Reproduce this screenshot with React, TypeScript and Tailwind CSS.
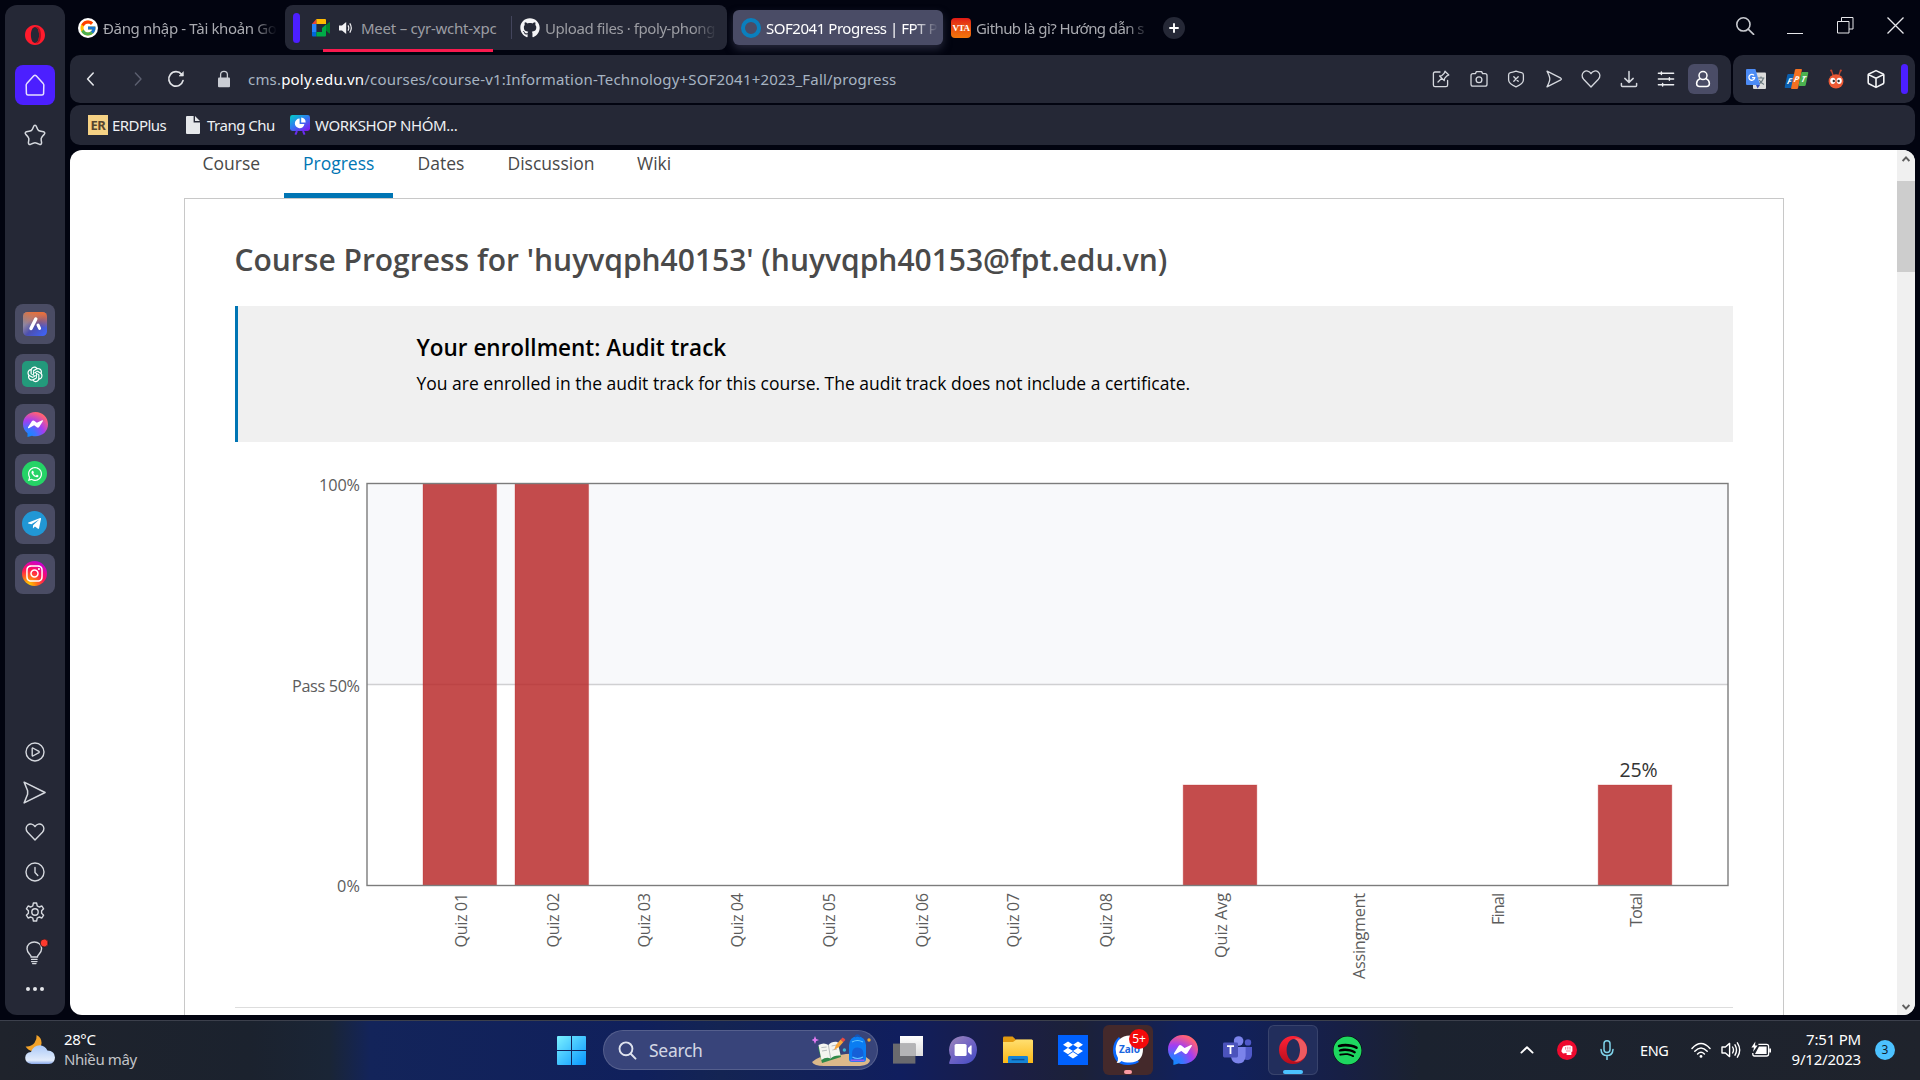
import React from "react";
import { FcGoogle } from "react-icons/fc";
import {
  FaGithub,
  FaWhatsapp,
  FaTelegramPlane,
  FaInstagram,
  FaDropbox,
  FaSpotify,
} from "react-icons/fa";
import { AiOutlineOpenAI } from "react-icons/ai";

type Kids = { children: React.ReactNode };

function Line({
  size = 20,
  width = 1.3,
  color = "#d5d8de",
  box = 20,
  children,
}: { size?: number; width?: number; color?: string; box?: number } & Kids) {
  return (
    <svg
      width={size}
      height={size}
      viewBox={`0 0 ${box} ${box}`}
      fill="none"
      stroke={color}
      strokeWidth={width}
      strokeLinecap="round"
      strokeLinejoin="round"
      className="shrink-0"
    >
      {children}
    </svg>
  );
}

const HEART = "M10 18 L2.6 10.2 C0.4 7.6 0.8 4.6 2.8 3 C5 1.2 8.4 1.8 10 4.6 C11.6 1.8 15 1.2 17.2 3 C19.2 4.6 19.6 7.6 17.4 10.2 Z";
const SEND = "M3 2.2 C5 6 5.8 7.8 5.8 10 C5.8 12.2 5 14 3 17.8 L16.8 10.8 Q18 10 16.8 9.2 Z";

function MessengerLogo({ size, id }: { size: number; id: string }) {
  return (
    <svg width={size} height={size} viewBox="0 0 30 30" className="shrink-0">
      <defs>
        <radialGradient id={id} cx="0.2" cy="1" r="1.1">
          <stop offset="0" stopColor="#0a8cff" />
          <stop offset="0.3" stopColor="#3f73ff" />
          <stop offset="0.6" stopColor="#a33df2" />
          <stop offset="0.93" stopColor="#ff5f7a" />
          <stop offset="1" stopColor="#ff6c66" />
        </radialGradient>
      </defs>
      <path d="M15 0 C23.5 0 30 6.2 30 14.6 C30 23 23.5 29 15 29 C13.4 29 12 28.8 10.8 28.4 L5.4 30 V25.4 C2 22.8 0 19 0 14.6 C0 6.2 6.5 0 15 0Z" fill={`url(#${id})`} />
      <path d="M6 18.2 L10.6 11 Q11.8 9.4 13.4 10.6 L16.6 13 L23 10 Q24.4 9.6 23.8 11 L19.4 18 Q18.2 19.6 16.6 18.4 L13.4 16 L7 19.4 Q5.6 19.6 6 18.2Z" fill="#fff" />
    </svg>
  );
}

function Sidebar() {
  const tile =
    "flex h-10 w-10 shrink-0 items-center justify-center rounded-lg bg-[#4a4c64]";
  const row = "flex h-10 w-10 items-center justify-center";
  return (
    <aside className="ml-[5px] mt-[5px] flex h-[1010px] w-[60px] shrink-0 flex-col items-center rounded-xl bg-[#252836]">
      <div className="flex h-[60px] items-center">
        <svg width="22" height="22" viewBox="0 0 22 22">
          <path fillRule="evenodd" d="M11 1 C16.6 1 21 5.4 21 11 C21 16.6 16.6 21 11 21 C5.4 21 1 16.6 1 11 C1 5.4 5.4 1 11 1Z M11 3 C8.6 3 6.9 6.6 6.9 11 C6.9 15.4 8.6 19 11 19 C13.4 19 15.1 15.4 15.1 11 C15.1 6.6 13.4 3 11 3Z" fill="#ff1b2d" />
          <path d="M11 3 C14 1.6 17 4.6 17 11 C17 17.4 14 20.4 11 19 C13.4 19 15.1 15.4 15.1 11 C15.1 6.6 13.4 3 11 3Z" fill="#b0101f" />
        </svg>
      </div>
      <div className="flex h-10 w-10 items-center justify-center rounded-lg bg-[#4c1fff]">
        <Line size={22} box={22} width={1.5} color="#e6e0ff">
          <path d="M2.2 11.6 Q2 10.6 2.8 9.6 L9.8 1.8 Q11 0.8 12.2 1.8 L19.2 9.6 Q20 10.6 19.8 11.6 L19.6 19.6 Q19.4 21 18 21 H4 Q2.6 21 2.4 19.6 Z" />
        </Line>
      </div>
      <div className="-ml-px mt-[10px] flex h-10 items-center">
        <Line size={22} box={22} width={1.5}>
          <path d="M11 1.2 Q12 1.2 12.6 3 Q13.6 6 15 6.8 Q16.6 7.2 19.6 7.8 Q21.6 8.6 20.2 10.4 Q17.4 13.2 17.2 14.4 Q17 16 17.6 18.6 Q17.6 20.8 15.6 20.4 Q12.4 18.8 11 18.8 Q9.6 18.8 6.4 20.4 Q4.4 20.8 4.4 18.6 Q5 16 4.8 14.4 Q4.6 13.2 1.8 10.4 Q0.4 8.6 2.4 7.8 Q5.4 7.2 7 6.8 Q8.4 6 9.4 3 Q10 1.2 11 1.2Z" />
        </Line>
      </div>
      <div className="mt-[149px] flex flex-col gap-[10px]">
        <div className={tile}>
          <svg width="24" height="24" viewBox="0 0 24 24">
            <defs>
              <linearGradient id="ariaA" x1="0" y1="0" x2="1" y2="1">
                <stop offset="0" stopColor="#5f8fb0" />
                <stop offset="0.3" stopColor="#8f86a0" />
                <stop offset="0.55" stopColor="#4c4fb0" />
                <stop offset="1" stopColor="#3d66ff" />
              </linearGradient>
              <linearGradient id="ariaB" x1="0.6" y1="0" x2="0.5" y2="0.6">
                <stop offset="0" stopColor="#e8703a" />
                <stop offset="1" stopColor="#e8703a" stopOpacity="0" />
              </linearGradient>
            </defs>
            <rect width="24" height="24" rx="4.5" fill="url(#ariaA)" />
            <rect width="24" height="24" rx="4.5" fill="url(#ariaB)" />
            <path d="M12.8 7 L8 16.4" stroke="#fff" strokeWidth="3.4" strokeLinecap="round" />
            <path d="M15 13 L16.6 16.4" stroke="#fff" strokeWidth="3" strokeLinecap="round" />
          </svg>
        </div>
        <div className={tile}>
          <div className="flex h-[26px] w-[26px] items-center justify-center rounded-[5px] bg-[#23997b]">
            <AiOutlineOpenAI size={20} color="#fff" />
          </div>
        </div>
        <div className={tile}>
          <MessengerLogo size={25} id="msgSide" />
        </div>
        <div className={tile}>
          <div className="-ml-px -mt-px flex h-[25px] w-[25px] items-center justify-center rounded-full bg-[#25d366]">
            <FaWhatsapp size={16} color="#fff" />
          </div>
        </div>
        <div className={tile}>
          <div className="-ml-px -mt-px flex h-[25px] w-[25px] items-center justify-center rounded-full bg-[#2197d5]">
            <FaTelegramPlane size={15} color="#fff" />
          </div>
        </div>
        <div className={tile}>
          <div className="-ml-px -mt-px flex h-[25px] w-[25px] items-center justify-center rounded-full bg-[radial-gradient(circle_at_25%_100%,#ffc800_5%,#ff6a1a_30%,#ff0f5a_55%,#c500d8_85%,#8a1cff_100%)]">
            <FaInstagram size={19} color="#fff" />
          </div>
        </div>
      </div>
      <div className="-ml-px mt-[138px] flex flex-col items-center">
        <div className={row}>
          <Line size={20} width={1.4}>
            <circle cx="10" cy="10" r="9" />
            <path d="M7.2 6.4 Q7.2 5.8 7.8 6 L14 9.4 Q14.6 10 14 10.6 L7.8 14 Q7.2 14.2 7.2 13.6Z" />
          </Line>
        </div>
        <div className={row}>
          <Line size={23} width={1.3}>
            <path d="M1 1 L19.2 10 L1 19 L4 11.6 V8.4 Z" />
          </Line>
        </div>
        <div className={row}>
          <Line size={20} width={1.4}><path d={HEART} /></Line>
        </div>
        <div className={row}>
          <Line size={20} width={1.4}>
            <circle cx="10" cy="10" r="9" />
            <path d="M10 5.4 V10.4 L12.8 13.4" />
          </Line>
        </div>
        <div className={row}>
          <Line size={20} width={1.4}>
            <circle cx="10" cy="10" r="3.2" />
            <path d="M8.4 1 H11.6 L12.2 3.8 L14.2 5 L16.9 4 L18.6 6.8 L16.6 8.8 V11.2 L18.6 13.2 L16.9 16 L14.2 15 L12.2 16.2 L11.6 19 H8.4 L7.8 16.2 L5.8 15 L3.1 16 L1.4 13.2 L3.4 11.2 V8.8 L1.4 6.8 L3.1 4 L5.8 5 L7.8 3.8Z" />
          </Line>
        </div>
        <div className="flex h-[42px] w-10 items-center justify-center">
          <svg width="26" height="28" viewBox="0 0 26 28" fill="none" stroke="#d5d8de" strokeWidth="1.4" strokeLinecap="round" className="ml-[3px]">
            <path d="M8.2 18 C8.2 15.6 4 14.4 4 9.8 C4 5.6 7.4 3 11.3 3 C15.2 3 18.6 5.6 18.6 9.8 C18.6 14.4 14.4 15.6 14.4 18Z" />
            <path d="M8.6 20.4 H14 M8.6 22.6 H14 M9.6 24.6 H13" />
            <circle cx="21.2" cy="4" r="4" fill="#ff3a2e" stroke="#14161f" strokeWidth="0.8" />
          </svg>
        </div>
        <div className="mt-[13px] flex gap-[3px]">
          <i className="h-1 w-1 rounded-full bg-[#e4e6ea]" />
          <i className="h-1 w-1 rounded-full bg-[#e4e6ea]" />
          <i className="h-1 w-1 rounded-full bg-[#e4e6ea]" />
        </div>
      </div>
    </aside>
  );
}

const tabText =
  "overflow-hidden whitespace-nowrap text-[15px] leading-5 [mask-image:linear-gradient(to_right,#000_86%,transparent)]";

function TabStrip() {
  return (
    <div className="flex h-[50px] items-start">
      <div className="mt-[18px] flex h-5 w-[215px] items-center pl-2">
        <span className="flex h-5 w-5 shrink-0 items-center justify-center rounded-full bg-white">
          <FcGoogle size={18} />
        </span>
        <span className={`ml-[5px] -mt-px w-[174px] tracking-[-0.35px] text-[#a9aab0] ${tabText}`}>Đăng nhập - Tài khoản Go</span>
      </div>
      <div className="relative mt-[5px] flex h-[45px] w-[442px] items-center rounded-lg bg-[#252836]">
        <div className="ml-2 h-[30px] w-[7px] rounded-full bg-[#4c1fff]" />
        <svg width="18" height="18" viewBox="0 0 18 18" className="ml-3">
          <path d="M4.4 0 V5 H0Z" fill="#ea4335" />
          <path d="M4.4 0 H13 Q14 0 14 1 V5 H4.4Z" fill="#ffba00" />
          <path d="M0 5 H4.4 V13 H0Z" fill="#2684fc" />
          <path d="M0 13 H4.4 V17.4 H1 Q0 17.4 0 16.4Z" fill="#0066da" />
          <path d="M4.4 13 H10 V9 L14 5.6 V16.4 Q14 17.4 13 17.4 H4.4Z" fill="#00ac47" />
          <path d="M14 6 L17.2 3.2 Q18 2.8 18 3.6 V14 Q18 14.8 17.2 14.4 L14 11.6Z" fill="#00832d" />
        </svg>
        <svg width="14" height="14" viewBox="0 0 14 14" className="ml-[9px]">
          <path d="M0 4.6 H3 L7.2 1 V13 L3 9.4 H0Z" fill="#f2f2f4" />
          <path d="M9 4.4 Q10.6 7 9 9.6 M10.8 2.4 Q13.8 7 10.8 11.6" stroke="#f2f2f4" strokeWidth="1.2" fill="none" />
        </svg>
        <span className="ml-2 w-[136px] whitespace-nowrap text-[15px] leading-5 tracking-[-0.24px] text-[#9c9da3]">Meet – cyr-wcht-xpc</span>
        <div className="ml-[14px] h-[23px] w-px bg-[#43455c]" />
        <FaGithub size={20} color="#f4f4f6" className="ml-2 shrink-0" />
        <span className={`ml-[5px] w-[172px] tracking-[-0.42px] text-[#9c9da3] ${tabText}`}>Upload files · fpoly-phong</span>
        <div className="absolute left-[38px] top-[44px] h-[3px] w-[170px] bg-[#fa1a4e]" />
      </div>
      <div className="ml-[6px] mt-[10px] flex h-[35px] w-[210px] items-center rounded-md bg-[#4a4c66] shadow-[0_4px_8px_rgba(74,76,102,0.5)]">
        <div className="ml-2 h-5 w-5 rounded-full border-4 border-[#0a7fbd]" />
        <span className={`ml-[5px] w-[172px] tracking-[-0.46px] text-white ${tabText}`}>SOF2041 Progress | FPT Po</span>
      </div>
      <div className="mt-[18px] flex h-5 items-center">
        <span className="ml-2 flex h-5 w-5 items-center justify-center rounded-[4px] bg-gradient-to-b from-[#e01515] to-[#f2760a] font-['Liberation_Serif'] text-[9px] font-bold leading-none tracking-[-0.5px] text-white">VTA</span>
        <span className={`ml-[5px] -mt-px w-[174px] tracking-[-0.58px] text-[#a9aab0] ${tabText}`}>Github là gì? Hướng dẫn s</span>
        <span className="ml-[13px] flex h-[22px] w-[22px] items-center justify-center rounded-full bg-[#252836]">
          <Line size={10} box={10} width={1.9} color="#fff"><path d="M5 1 V9 M1 5 H9" /></Line>
        </span>
      </div>
      <div className="ml-auto mr-[11px] mt-[15px] flex items-center">
        <Line size={20} width={1.6} color="#c8cacf">
          <circle cx="8.4" cy="9.4" r="6.6" />
          <path d="M13.2 14.2 L18.6 19.4" />
        </Line>
        <svg width="16" height="17" viewBox="0 0 16 17" className="ml-8"><path d="M0 16.5 H16" stroke="#e6e7ea" /></svg>
        <svg width="17" height="17" viewBox="0 0 17 17" className="ml-[34px]" fill="none" stroke="#e6e7ea">
          <path d="M0.5 4.5 H12 V16 H0.5Z M4.5 4.5 V0.5 H16 V12 H12" />
        </svg>
        <svg width="17" height="17" viewBox="0 0 17 17" className="ml-[33px]" stroke="#e6e7ea" strokeWidth="1.3">
          <path d="M0.5 0.5 L16.5 16.5 M16.5 0.5 L0.5 16.5" />
        </svg>
      </div>
    </div>
  );
}

function AddressBar() {
  return (
    <div className="mt-[5px] flex h-12 gap-[2px]">
      <div className="flex w-[1661px] items-center rounded-[10px] bg-[#252836]">
        <div className="ml-[13px] flex w-4 justify-center">
          <Line size={16} box={16} width={1.6} color="#e2e4e8"><path d="M10.2 2 L4.6 8 L10.2 14" /></Line>
        </div>
        <div className="ml-[31px]">
          <Line size={16} box={16} width={1.4} color="#5c5f70"><path d="M5.4 2 L11 8 L5.4 14" /></Line>
        </div>
        <div className="ml-[21px]">
          <Line size={18} box={18} width={1.7} color="#e2e4e8">
            <path d="M14.6 4.4 A7.2 7.2 0 1 0 16 10.6" />
            <path d="M12.4 6 H16.4 V2 Z" fill="#e2e4e8" strokeWidth="0.6" />
          </Line>
        </div>
        <svg width="14" height="18" viewBox="0 0 14 18" className="ml-8">
          <rect x="1" y="7.4" width="12" height="9.8" rx="1" fill="#c9ccd3" />
          <path d="M3.6 8 V4.6 Q3.6 1.4 7 1.4 Q10.4 1.4 10.4 4.6 V8" fill="none" stroke="#c9ccd3" strokeWidth="1.3" />
        </svg>
        <span className="ml-[17px] whitespace-nowrap text-[15px] leading-5 tracking-[0.185px] text-[#a7b4c2]">
          cms.<span className="text-white">poly.edu.vn</span>/courses/course-v1:Information-Technology+SOF2041+2023_Fall/progress
        </span>
        <div className="ml-auto mr-[13px] flex items-center">
          <div className="flex items-center gap-[17.5px]">
            <Line width={1.3}>
              <path d="M9 3 H4 Q2.4 3 2.4 4.6 V16 Q2.4 17.6 4 17.6 H15 Q16.6 17.6 16.6 16 V11.4" />
              <path d="M14 2.2 L17.8 6 L16 6.8 L13.6 9.4 L13.2 11.6 L8.6 7 L10.8 6.6 L13.2 4.2 Z M10.6 9.4 L7 13" />
            </Line>
            <Line width={1.3}>
              <path d="M6.4 4.6 L7.4 2.6 H12.6 L13.6 4.6 H16 Q18 4.6 18 6.6 V15.2 Q18 17.2 16 17.2 H4 Q2 17.2 2 15.2 V6.6 Q2 4.6 4 4.6Z" />
              <circle cx="10" cy="10.8" r="2.9" />
            </Line>
            <Line width={1.3}>
              <path d="M10 2.2 Q13.6 3.4 15.6 3.6 Q17.4 4 17.4 6 V11 Q17.2 15 10 17.8 Q2.8 15 2.6 11 V6 Q2.6 4 4.4 3.6 Q6.4 3.4 10 2.2Z M7.8 7.8 L12.2 12.2 M12.2 7.8 L7.8 12.2" />
            </Line>
            <Line width={1.3}><path d={SEND} /></Line>
            <Line width={1.3}><path d={HEART} /></Line>
            <Line width={1.5}>
              <path d="M10 2.6 V13 M5.8 9.4 L10 13.4 L14.2 9.4 M2.4 14.6 V16.4 Q2.4 17.4 3.4 17.4 H16.6 Q17.6 17.4 17.6 16.4 V14.6" />
            </Line>
            <Line width={1.5} color="#eceef1">
              <path d="M2.4 4.2 H17.6 M2.4 10 H17.6 M2.4 15.8 H17.6 M5.4 3 V5.4 M13.4 8.8 V11.2 M6.6 14.6 V17" />
            </Line>
          </div>
          <div className="ml-3 flex h-[30px] w-[30px] items-center justify-center rounded-md bg-[#4a4c66]">
            <Line width={1.5} color="#fff">
              <circle cx="10" cy="6.6" r="4" />
              <path d="M7 9.6 Q3.6 11.4 3.6 14.4 Q3.6 17.4 6.6 17.4 H13.4 Q16.4 17.4 16.4 14.4 Q16.4 11.4 13 9.6" />
            </Line>
          </div>
        </div>
      </div>
      <div className="flex w-[182px] items-center rounded-[10px] bg-[#252836] pl-[13px]">
        <svg width="20" height="20" viewBox="0 0 20 20">
          <rect x="7" y="3.4" width="13" height="16.6" rx="1" fill="#dcdcdc" />
          <path d="M12 9 H18.4 M15 7.6 V9 M17.4 9 Q16.4 13 12.4 15 M13.2 11 Q15 14 18 15.4" stroke="#6b7a80" strokeWidth="1.1" fill="none" />
          <path d="M1 0 H9.4 L14 16 H1 Q0 16 0 15 V1 Q0 0 1 0Z" fill="#4c8bf5" />
          <path d="M10 16 H14 L11.6 19.4Z" fill="#3a4bb5" />
          <path d="M8 6.4 A2.9 2.9 0 1 0 8.7 8.6 H6" stroke="#fff" strokeWidth="1.3" fill="none" />
        </svg>
        <div className="ml-5 flex h-5 w-5 items-center justify-center text-[8px] font-bold italic leading-none text-white">
          <span className="mt-[3px] flex h-[14px] w-[7px] shrink-0 -skew-x-12 items-center justify-center rounded-[1px] bg-[#0b5fae]">F</span>
          <span className="flex h-5 w-[7px] shrink-0 -skew-x-12 items-center justify-center rounded-[1px] bg-[#f37021]">P</span>
          <span className="flex h-[14px] w-[7px] shrink-0 -skew-x-12 items-center justify-center rounded-[1px] bg-[#4bb14f]">T</span>
        </div>
        <svg width="20" height="20" viewBox="0 0 20 20" className="ml-5">
          <path d="M7 6 L5.6 2 M13 6 L14.4 2" stroke="#c7452b" strokeWidth="1.3" />
          <circle cx="5.2" cy="1.6" r="1.1" fill="#c7452b" />
          <circle cx="14.8" cy="1.6" r="1.1" fill="#c7452b" />
          <ellipse cx="10" cy="12.4" rx="7.4" ry="7.2" fill="#ee5a35" />
          <ellipse cx="6.8" cy="11.8" rx="2.6" ry="3.1" fill="#fff" />
          <ellipse cx="13.2" cy="11.8" rx="2.6" ry="3.1" fill="#fff" />
          <circle cx="7.8" cy="12" r="1.2" fill="#333" />
          <circle cx="12.6" cy="12" r="1.2" fill="#333" />
        </svg>
        <div className="ml-5">
          <Line width={1.6} color="#f4f5f7">
            <path d="M10 1.6 L17.2 5 Q17.8 5.4 17.8 6 V13.6 Q17.8 14.4 17.2 14.8 L10 18.4 L2.8 14.8 Q2.2 14.4 2.2 13.6 V6 Q2.2 5.4 2.8 5 Z M2.6 5.6 L10 9.2 L17.4 5.6 M10 9.2 V18" />
          </Line>
        </div>
        <div className="ml-[15px] h-[30px] w-[7px] rounded-full bg-[#4c1fff]" />
      </div>
    </div>
  );
}

function Bookmarks() {
  const label = "whitespace-nowrap text-[15px] leading-5 text-[#eef0f3]";
  return (
    <div className="mt-[2px] flex h-10 items-center rounded-[10px] bg-[#252836] pl-[18px]">
      <span className="flex h-5 w-5 items-center justify-center bg-[#f5d184] text-[13px] font-bold leading-none tracking-[-0.5px] text-[#55452f]">ER</span>
      <span className={`ml-1 w-[74px] tracking-[-0.55px] ${label}`}>ERDPlus</span>
      <svg width="14" height="18" viewBox="0 0 14 18"><path d="M1 0 H7.6 V6.4 H14 V17 Q14 18 13 18 H1 Q0 18 0 17 V1 Q0 0 1 0Z M9 0 L14 5 H9Z" fill="#e6e8eb" /></svg>
      <span className={`ml-[7px] w-[83px] tracking-[-0.5px] ${label}`}>Trang Chu</span>
      <svg width="20" height="20" viewBox="0 0 20 20">
        <defs>
          <linearGradient id="ws" x1="0" y1="0" x2="0.8" y2="1">
            <stop offset="0" stopColor="#00d0c6" />
            <stop offset="0.5" stopColor="#2f7cf0" />
            <stop offset="1" stopColor="#7a1cf0" />
          </linearGradient>
        </defs>
        <rect width="20" height="16" rx="2.4" fill="url(#ws)" />
        <path d="M7 16 L5.4 19.6 M13 16 L14.6 19.6" stroke="#6a2cf0" strokeWidth="2" />
        <path d="M9.6 3.6 A4.8 4.8 0 1 0 14.4 9 H9.6Z" fill="#fff" />
        <path d="M11.2 2.6 A4.8 4.8 0 0 1 15.6 7.4 H11.2Z" fill="#fff" />
      </svg>
      <span className={`ml-[5px] tracking-[-0.36px] ${label}`}>WORKSHOP NHÓM...</span>
    </div>
  );
}

const BARS = [
  { x: 423, value: 100 },
  { x: 515, value: 100 },
  { x: 1183.2, value: 25 },
  { x: 1598.2, value: 25 },
];
const LABELS: [number, string, number][] = [
  [467, "Quiz 01", 54.5],
  [559, "Quiz 02", 54.5],
  [650, "Quiz 03", 54.5],
  [743, "Quiz 04", 54.5],
  [835, "Quiz 05", 54.5],
  [928, "Quiz 06", 54.5],
  [1019, "Quiz 07", 54.5],
  [1112, "Quiz 08", 54.5],
  [1226.5, "Quiz Avg", 65],
  [1364.5, "Assingment", 86],
  [1503.5, "Final", 32],
  [1642, "Total", 34],
];

function GradeChart() {
  return (
    <svg width="1498" height="540" viewBox="235 462 1498 540" className="block font-['Open_Sans']">
      <rect x="367" y="483.5" width="1361" height="201" fill="#f8f9fb" />
      <path d="M367 684.5 H1728" stroke="#d0d0d2" strokeWidth="1.4" />
      {BARS.map((b) => (
        <rect key={b.x} x={b.x} y={885.5 - b.value * 4.02} width="73.6" height={b.value * 4.02} fill="#b82828" fillOpacity="0.83" stroke="#b82828" strokeOpacity="0.3" />
      ))}
      <rect x="367" y="483.5" width="1361" height="402" fill="none" stroke="#7c7c7c" strokeWidth="1.4" />
      <g fontSize="16.25" fill="#5c5c5c" textAnchor="end">
        <text x="360" y="491" textLength="41">100%</text>
        <text x="360" y="692" textLength="68">Pass 50%</text>
        <text x="360" y="892" textLength="23">0%</text>
        {LABELS.map(([x, name, len]) => (
          <text key={name} transform={`translate(${x} 893) rotate(-90)`} textLength={len}>{name}</text>
        ))}
      </g>
      <text x="1638.5" y="776.5" fontSize="19.5" fill="#333" textAnchor="middle" textLength="38">25%</text>
    </svg>
  );
}

function CoursePage() {
  return (
    <div className="mt-[5px] flex h-[865px] overflow-hidden rounded-xl bg-white font-['Open_Sans']">
      <div className="w-[1827px]">
        <nav className="flex h-12 pl-[114px] text-[17.5px] leading-[26px] text-[#484848]">
          <span className="w-[100px] pl-[18.5px]">Course</span>
          <span className="h-12 w-[109px] border-b-[5px] border-[#0075b4] pl-[19px] text-[#0075b4]">Progress</span>
          <span className="w-[90px] pl-[24.5px]">Dates</span>
          <span className="w-[129px] pl-[24.5px]">Discussion</span>
          <span className="pl-[25px]">Wiki</span>
        </nav>
        <main className="ml-[114px] h-[900px] w-[1600px] border border-[#c8c8c8] pl-[50px] pt-[42px]">
          <h1 className="-ml-[0.5px] h-[65px] whitespace-nowrap text-[30px] font-semibold leading-[38px] tracking-[-0.01px] text-[#4a4a4a]">
            Course Progress for 'huyvqph40153' (huyvqph40153@fpt.edu.vn)
          </h1>
          <section className="h-[136px] w-[1498px] border-l-[3px] border-[#0075b4] bg-[#f0f0f0] pl-[178.5px] pt-[26px] text-black">
            <h2 className="whitespace-nowrap text-[22.5px] font-semibold leading-8">Your enrollment: Audit track</h2>
            <p className="mt-[7px] whitespace-nowrap text-[17.5px] leading-6">
              You are enrolled in the audit track for this course. The audit track does not include a certificate.
            </p>
          </section>
          <div className="mt-5 h-[546px] w-[1498px] border-b border-[#dddddd]">
            <GradeChart />
          </div>
        </main>
      </div>
      <div className="flex w-[18px] flex-col items-center bg-[#f0f0f0]">
        <div className="flex h-[31px] items-start pt-[5px]">
          <svg width="8" height="8" viewBox="0 0 8 8" fill="none" stroke="#606060" strokeWidth="2"><path d="M0.6 6 L4 2.4 L7.4 6" /></svg>
        </div>
        <div className="h-[91px] w-[18px] bg-[#cdcdcd]" />
        <svg width="8" height="8" viewBox="0 0 8 8" fill="none" stroke="#606060" strokeWidth="2" className="mb-[4px] mt-auto"><path d="M0.6 2 L4 5.6 L7.4 2" /></svg>
      </div>
    </div>
  );
}

function Taskbar() {
  return (
    <footer className="flex h-[60px] items-center border-t border-[#3c404c] bg-[linear-gradient(to_right,#1f232c_0px,#1b222e_250px,#1a2536_330px,#13245a_370px,#10205c_640px,#142453_720px,#101e5e_900px,#1b1e45_1010px,#1c2138_1080px,#12215a_1180px,#11215c_1230px,#171f45_1340px,#1b222f_1420px,#1f232c_1920px)] pb-px text-white">
      <svg width="32" height="32" viewBox="0 0 32 32" className="ml-6 mt-[-3px]">
        <defs>
          <linearGradient id="cloud" x1="0" y1="0" x2="0" y2="1">
            <stop offset="0" stopColor="#a9c8f8" />
            <stop offset="0.8" stopColor="#e2ecfb" />
            <stop offset="1" stopColor="#86a6e8" />
          </linearGradient>
        </defs>
        <path d="M12.6 2 Q17.6 4.4 17.6 10 Q17.2 17 9 18 Q4 17.6 1.6 13.4 Q7 14 10.4 10 Q13 6.6 12.6 2Z" fill="#f2a32b" />
        <path d="M7.6 31 Q1.2 30.4 1.2 24.8 Q1.4 19.6 7 19 Q9.4 12.2 15.8 12.2 Q21 12.4 23.4 17.6 Q30.8 18 31 24.4 Q30.6 30.6 25 31Z" fill="url(#cloud)" />
      </svg>
      <div className="-mt-[3px] ml-2 w-[493px] text-[15px] leading-5 tracking-[-0.4px]">
        <div>28°C</div>
        <div className="text-[#c2c4c8]">Nhiều mây</div>
      </div>
      <svg width="29" height="29" viewBox="0 0 29 29">
        <defs>
          <linearGradient id="win" x1="0" y1="0" x2="1" y2="1">
            <stop offset="0" stopColor="#7bf1ff" />
            <stop offset="1" stopColor="#0795ff" />
          </linearGradient>
        </defs>
        <path d="M0 1 Q0 0 1 0 H14 V14 H0Z M15 0 H28 Q29 0 29 1 V14 H15Z M0 15 H14 V29 H1 Q0 29 0 28Z M15 15 H29 V28 Q29 29 28 29 H15Z" fill="url(#win)" />
      </svg>
      <div className="ml-[17px] flex h-10 w-[275px] items-center rounded-full border border-white/15 bg-[#38447a]">
        <div className="ml-[14px]">
          <Line size={19} width={2} color="#dfe3ee"><circle cx="8.4" cy="8.2" r="6.8" /><path d="M13.4 13.4 L18.4 18.6" /></Line>
        </div>
        <span className="ml-3 w-[163px] text-[17.5px] leading-6 tracking-[-0.3px] text-[#d3d7e4]">Search</span>
        <svg width="60" height="34" viewBox="0 0 60 34">
          <path d="M0 29 Q10 20 28 22 Q48 18 58 27 Q58 32 48 33 H12 Q2 33 0 29Z" fill="#dcb88a" />
          <path d="M3 3 L4.2 6 L7 7 L4.2 8 L3 11 L1.8 8 L-1 7 L1.8 6Z" fill="#e07af0" />
          <path d="M6 14 L16 12 L26 10 L29 24 L10 30Z" fill="#2f8a4a" />
          <path d="M6.5 12 Q12 9 16.4 12 Q20 8 25.6 9 L28.6 22.6 Q22 22 18.6 25.4 Q14 23.6 9.4 27Z" fill="#f4f5f0" />
          <path d="M16.4 12 L18.6 25 M9.4 14.6 L14.6 14 M10 18 L15 17.2 M19.6 13 L24.6 12 M20.4 17 L25 16" stroke="#b0b5b8" strokeWidth="0.9" />
          <path d="M22 17 L24 12 L28.6 6.6 L31.4 9 L27 14Z" fill="#f6a53a" />
          <path d="M28.6 6.6 L30.6 4.4 Q33 5.4 33.4 7 L31.4 9Z" fill="#e94b42" />
          <circle cx="32.4" cy="17" r="1.7" fill="#3fb8d6" />
          <path d="M37 12 Q37.4 3.6 45.4 3.4 Q53.6 3.6 54 12 V26 Q54 29 51 29 H40 Q37 29 37 26Z" fill="#0a7df2" />
          <path d="M43 4 Q45.4 0 48 4" stroke="#1455b8" strokeWidth="1.6" fill="none" />
          <path d="M40 20 Q40.6 14.6 45.6 14.6 Q51 14.8 51.4 20 V27 H40Z" fill="#1560d8" />
          <path d="M40 9 Q45.4 6 51 9 M40.4 24 Q45.4 27 51 24" stroke="#63c6ff" strokeWidth="1.2" fill="none" />
          <path d="M38.6 27.4 H52.4" stroke="#9a5cf0" strokeWidth="1.8" />
          <circle cx="57" cy="7" r="1.7" fill="#f2a92a" />
        </svg>
      </div>
      <svg width="30" height="30" viewBox="0 0 30 30" className="ml-[15px]">
        <defs>
          <linearGradient id="tv" x1="0" y1="0" x2="0" y2="1"><stop offset="0" stopColor="#fff" /><stop offset="1" stopColor="#dcdcdc" /></linearGradient>
        </defs>
        <rect x="7" y="1" width="23" height="20" fill="url(#tv)" />
        <rect x="0" y="8.6" width="22.4" height="20" fill="#6a6a6e" />
        <rect x="7" y="8.6" width="15.4" height="12.4" fill="#b4b4b6" />
      </svg>
      <svg width="30" height="30" viewBox="0 0 30 30" className="ml-[25px]">
        <defs>
          <linearGradient id="chat" x1="0" y1="0" x2="0.8" y2="1"><stop offset="0" stopColor="#a08ab8" /><stop offset="0.5" stopColor="#7466c4" /><stop offset="1" stopColor="#4a4fc4" /></linearGradient>
        </defs>
        <path d="M15 1 Q28.8 2 29 15 Q28 28.6 15 29 H2 Q0.6 29 1.2 27.6 L3 22 Q1 19 1 15 Q1.8 2 15 1Z" fill="url(#chat)" />
        <rect x="6.6" y="9" width="12" height="12" rx="1.6" fill="#fff" />
        <path d="M20 13 L22.6 10.4 Q23.6 10 23.6 11 V19 Q23.6 20 22.6 19.6 L20 17Z" fill="#fff" />
      </svg>
      <svg width="30" height="28" viewBox="0 0 30 28" className="ml-[25px]">
        <defs>
          <linearGradient id="fld" x1="0" y1="0" x2="0" y2="1"><stop offset="0" stopColor="#ffdf70" /><stop offset="1" stopColor="#fcb817" /></linearGradient>
        </defs>
        <path d="M0 2 Q0 0.6 1.4 0.6 H9.6 L13 3.8 H28.6 Q30 3.8 30 5 V9 H0Z" fill="#e29a10" />
        <path d="M0 6 H10 L13.4 3.6 H28.6 Q30 3.8 30 5 V27 H0Z" fill="url(#fld)" />
        <path d="M5 27 V21.4 Q5 20 6.4 20 H23.6 Q25 20 25 21.4 V27Z" fill="#1583d6" />
        <path d="M8.6 23.6 H21.4" stroke="#0b4f94" strokeWidth="1.4" />
      </svg>
      <div className="ml-[25px] flex h-[30px] w-[30px] items-center justify-center bg-[#0061fe]">
        <FaDropbox size={20} color="#fff" />
      </div>
      <div className="relative ml-[15px] flex h-[50px] w-[50px] items-center justify-center rounded-md bg-[#44292b]">
        <svg width="32" height="32" viewBox="0 0 32 32">
          <path d="M7 3 Q1 8 1 16 Q1 23 4.6 27 Q9 31.6 17 31 Q24 30.4 27 28Z" fill="#0a68ff" />
          <path d="M18 1.4 Q31 2 31 15 Q31 28 18 28.6 Q12 28.6 9.6 27 Q7 29.6 4.6 28.6 Q6.4 27 6 24 Q3.6 20 3.6 15 Q4.4 2 18 1.4Z" fill="#fff" />
        </svg>
        <span className="absolute left-4 top-[16px] text-[10px] font-bold leading-4 text-[#1a66e0]">Zalo</span>
        <span className="absolute left-[26px] top-1 flex h-5 w-5 items-center justify-center rounded-full bg-[#f40a0a] text-[12px] leading-none">5+</span>
        <span className="absolute bottom-px left-[21px] h-1 w-2 rounded-full bg-[#fb9ba3]" />
      </div>
      <div className="ml-[15px]"><MessengerLogo size={30} id="msgTask" /></div>
      <svg width="30" height="30" viewBox="0 0 30 30" className="ml-[25px]">
        <circle cx="15.6" cy="6" r="4.8" fill="#7b83eb" />
        <circle cx="25" cy="7.4" r="3.2" fill="#5059c9" />
        <path d="M20 12 H29 V20 Q28.4 25 24 25 Q21 25 20 23Z" fill="#5059c9" />
        <path d="M8 12 H22.6 V21 Q22 28.6 15.4 28.6 Q9 28 8 22Z" fill="#7b83eb" />
        <rect x="0" y="7.4" width="15" height="15" rx="1.4" fill="#4b53bc" />
        <path d="M4 11.2 H11 M7.5 11.2 V19" stroke="#fff" strokeWidth="1.8" />
      </svg>
      <div className="relative ml-[15px] flex h-[50px] w-[50px] items-center justify-center rounded-md border border-white/10 bg-[#222e5c]">
        <svg width="30" height="30" viewBox="0 0 30 30">
          <defs>
            <linearGradient id="op" x1="0" y1="0" x2="0" y2="1"><stop offset="0" stopColor="#ff2236" /><stop offset="1" stopColor="#b80d1c" /></linearGradient>
          </defs>
          <path fillRule="evenodd" d="M15 1 A14 14 0 0 1 15 29 A14 14 0 0 1 15 1Z M16 4 C11.6 4 8.6 9 8.6 15 C8.6 21 11.6 26 16 26 C19.6 26 22 21 22 15 C22 9 19.6 4 16 4Z" fill="url(#op)" />
          <path d="M16 4 C19 1.6 29 5 29 15 C29 25 19 28.4 16 26 C19.6 26 22 21 22 15 C22 9 19.6 4 16 4Z" fill="#ec5a60" />
        </svg>
        <span className="absolute bottom-0 left-[14px] h-1 w-5 rounded-full bg-[#4cc2ff]" />
      </div>
      <div className="ml-[15px] flex h-[29px] w-[29px] items-center justify-center rounded-full bg-black">
        <FaSpotify size={29} color="#1ed760" />
      </div>
      <div className="ml-auto flex items-center">
        <Line size={14} box={14} width={1.9} color="#fff"><path d="M1.4 9.6 L7 4.2 L12.6 9.6" /></Line>
        <span className="ml-[23px] flex h-5 w-5 items-center justify-center rounded-full bg-[#ee0a2e]">
          <svg width="12" height="11" viewBox="0 0 12 11">
            <path d="M0.6 5 L2 1.4 L5 0.4 L9 0.2 L11.4 1.6 V6.4 L10.4 7 V10 H5.6 V8 L2 8.4 L0.4 6.6Z" fill="#fff" />
            <path d="M4.6 2 V4.6 M6.8 1.8 V4.6 M9 1.8 V4.6 M5 6 H9.6" stroke="#ee0a2e" strokeWidth="0.5" />
          </svg>
        </span>
        <svg width="14" height="20" viewBox="0 0 14 20" fill="none" stroke="#7fd3ea" strokeWidth="1.5" className="ml-[23px]">
          <rect x="4" y="0.8" width="6" height="11.6" rx="3" />
          <path d="M1 9.4 Q1.4 15.6 7 15.6 Q12.6 15.6 13 9.4 M7 15.6 V19.6" strokeLinecap="round" />
        </svg>
        <span className="ml-[26px] w-[30px] text-[14.5px] leading-5 tracking-[-0.4px]">ENG</span>
        <svg width="20" height="17" viewBox="0 0 20 17" fill="none" stroke="#fff" strokeWidth="1.5" strokeLinecap="round" className="ml-[21px]">
          <path d="M1 6.4 Q10 -3.4 19 6.4 M3.8 9.2 Q10 2.6 16.2 9.2 M6.6 12 Q10 8.6 13.4 12" />
          <circle cx="10" cy="14.4" r="1.4" fill="#fff" stroke="none" />
        </svg>
        <svg width="20" height="18" viewBox="0 0 20 18" fill="none" stroke="#fff" strokeWidth="1.4" strokeLinejoin="round" strokeLinecap="round" className="ml-[10px]">
          <path d="M1 6 H4.4 L8.6 2.4 V15.6 L4.4 12 H1Z M11.6 6 Q13.4 9 11.6 12 M14 3.8 Q17 9 14 14.2 M16.4 1.8 Q21 9 16.4 16.2" />
        </svg>
        <svg width="20" height="18" viewBox="0 0 20 18" fill="none" stroke="#fff" strokeWidth="1.3" className="ml-[10px]">
          <path d="M7.4 3.4 H15.6 Q17.6 3.4 17.6 5.4 V13 Q17.6 15 15.6 15 H3.4 Q1.8 15 1.8 13 V12" />
          <path d="M8 5.4 H15.6 V13 H4 Z M18.2 7.4 H20 V11.4 H18.2Z M4.4 0.4 L0.4 6.6 H3 L2 11 L6.6 4.6 H4Z" fill="#fff" stroke="none" />
        </svg>
        <div className="-mt-[3px] ml-[10px] w-20 whitespace-nowrap text-right text-[15px] leading-5 tracking-[-0.2px]">
          <div>7:51 PM</div>
          <div>9/12/2023</div>
        </div>
        <span className="ml-[14px] mr-[25px] flex h-5 w-5 items-center justify-center rounded-full bg-[#4cc2ff] text-[12px] leading-none text-[#10202c]">3</span>
      </div>
    </footer>
  );
}

export default function App() {
  return (
    <div className="flex h-[1080px] w-[1920px] flex-col overflow-hidden bg-[#020410] font-['Noto_Sans','Open_Sans',sans-serif]">
      <div className="flex h-[1020px]">
        <Sidebar />
        <div className="ml-[5px] w-[1845px]">
          <TabStrip />
          <AddressBar />
          <Bookmarks />
          <CoursePage />
        </div>
      </div>
      <Taskbar />
    </div>
  );
}
